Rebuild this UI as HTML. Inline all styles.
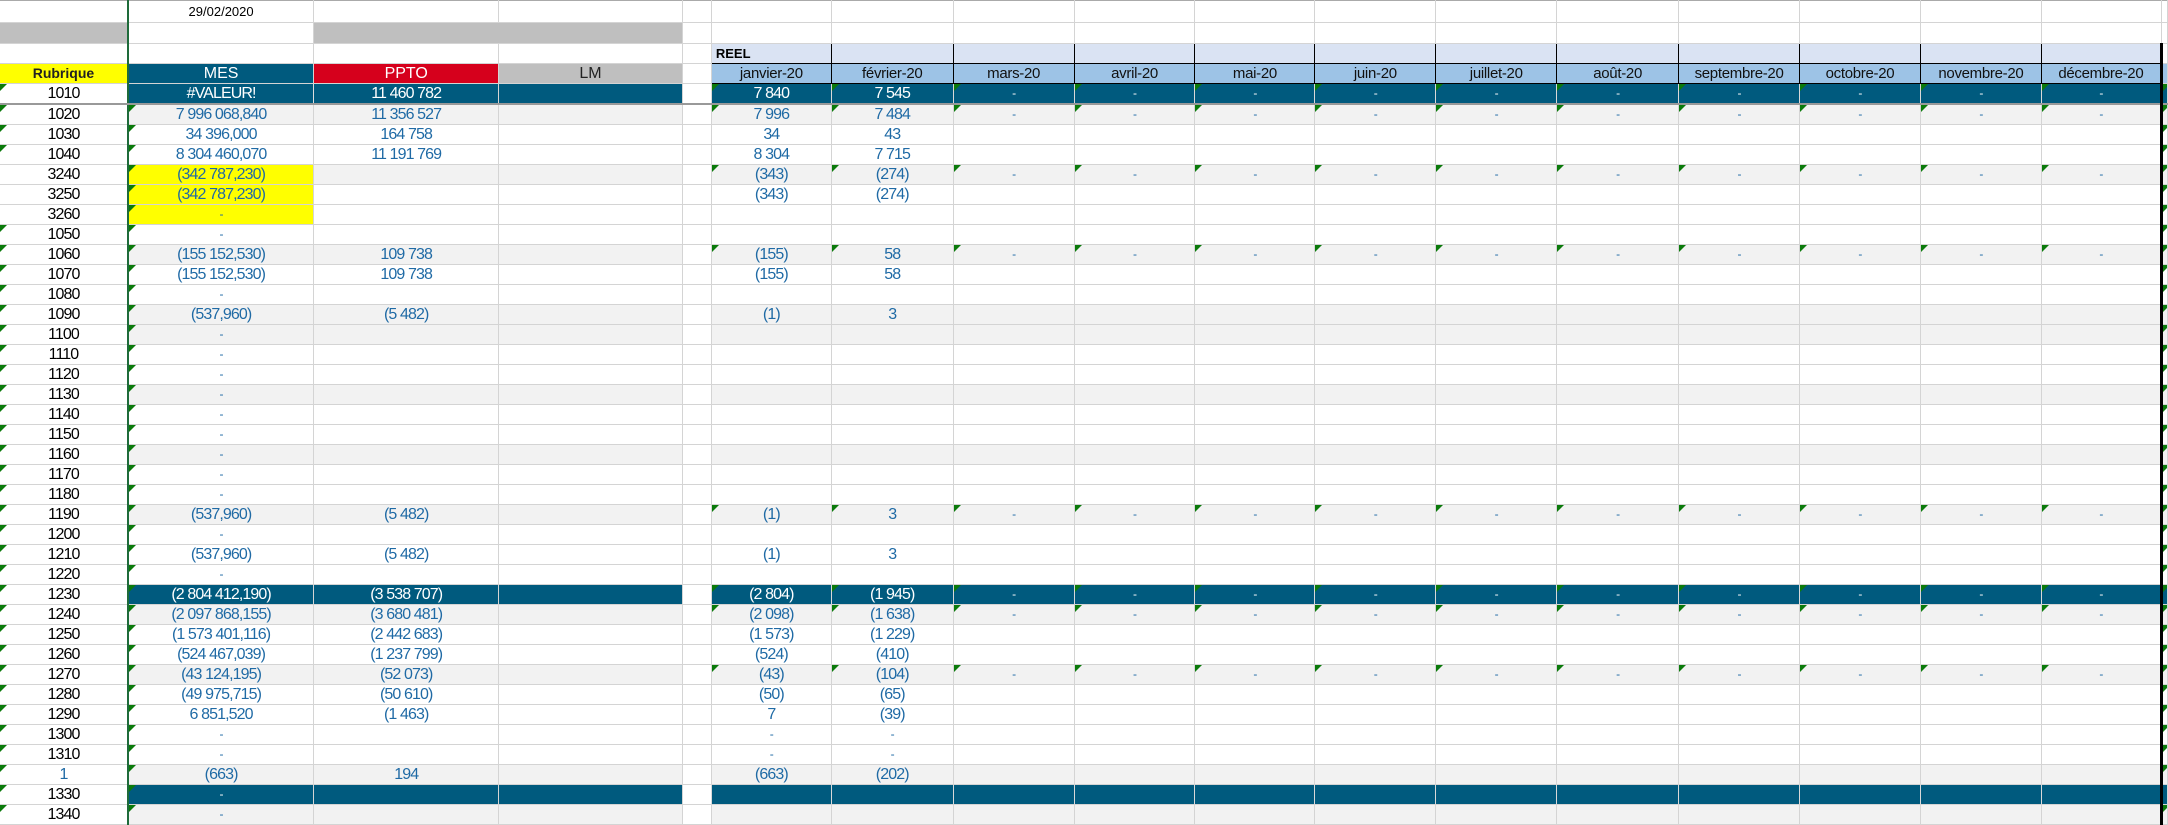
<!DOCTYPE html>
<html><head><meta charset="utf-8">
<style>
html,body{margin:0;padding:0;background:#fff;width:2168px;height:821px;overflow:hidden}
table{border-collapse:collapse;table-layout:fixed;position:absolute;left:0;top:0}
td{border-right:1px solid #d4d4d4;border-bottom:1px solid #d4d4d4;padding:0;text-align:center;font-family:"Liberation Sans",Arial,sans-serif;font-size:16px;color:#1f6aa5;position:relative;white-space:nowrap;overflow:hidden;line-height:19px;letter-spacing:-0.9px}
td.a{color:#000!important;background:#fff!important}
td.e{background:#fff!important;border-right:1px solid #d4d4d4}
tr.d td:nth-child(2){border-left:2px solid #1e6b3a}
tr.g td{background:#f2f2f2}
tr.b td{background:#005a7e;color:#fff}
tr.b td:nth-child(n+5){border-right-color:#d8d8d8}
td.y{background:#ffff00!important;color:#1f6aa5!important}
td.t::before{content:"";position:absolute;left:0;top:0;border-top:7px solid #0b7a0b;border-right:7px solid transparent}
td.k{border-right:3px solid #000!important}
td.m{font-size:12px}
td.h{font-family:"Liberation Sans",Calibri,sans-serif;letter-spacing:0;font-size:14px;color:#000}
.mh td.mo{background:#9dc3e6;border:1px solid #000;color:#111;font-size:15px;letter-spacing:-0.3px}
.rh td.mo{background:#dae3f3;border:1px solid #000;border-bottom:1px solid #000}
</style></head><body>
<table>
<colgroup><col style="width:128px"><col style="width:186px"><col style="width:185px"><col style="width:184px"><col style="width:29px"><col style="width:120px"><col style="width:122px"><col style="width:121px"><col style="width:121px"><col style="width:120px"><col style="width:121px"><col style="width:121px"><col style="width:122px"><col style="width:121px"><col style="width:121px"><col style="width:121px"><col style="width:120px"><col style="width:6px"></colgroup>
<tr style="height:22px" class="d"><td class="a" style="border-top:1px solid #aaa"></td><td class="h" style="font-size:13px;border-top:1px solid #aaa">29/02/2020</td><td style="border-top:1px solid #aaa"></td><td style="border-top:1px solid #aaa"></td><td style="border-top:1px solid #aaa"></td><td style="border-top:1px solid #aaa"></td><td style="border-top:1px solid #aaa"></td><td style="border-top:1px solid #aaa"></td><td style="border-top:1px solid #aaa"></td><td style="border-top:1px solid #aaa"></td><td style="border-top:1px solid #aaa"></td><td style="border-top:1px solid #aaa"></td><td style="border-top:1px solid #aaa"></td><td style="border-top:1px solid #aaa"></td><td style="border-top:1px solid #aaa"></td><td style="border-top:1px solid #aaa"></td><td style="border-top:1px solid #aaa"></td><td style="border-top:1px solid #aaa"></td></tr>
<tr style="height:21px" class="d"><td style="background:#bfbfbf"></td><td></td><td style="background:#bfbfbf;border-right:none"></td><td style="background:#bfbfbf"></td><td></td><td></td><td></td><td></td><td></td><td></td><td></td><td></td><td></td><td></td><td></td><td></td><td></td><td></td></tr>
<tr style="height:20px" class="d rh"><td></td><td></td><td></td><td></td><td></td><td class="mo h" style="text-align:left;font-weight:bold;font-size:13px;padding-left:4px">REEL</td><td class="mo"></td><td class="mo"></td><td class="mo"></td><td class="mo"></td><td class="mo"></td><td class="mo"></td><td class="mo"></td><td class="mo"></td><td class="mo"></td><td class="mo"></td><td class="mo k"></td><td></td></tr>
<tr style="height:19px" class="d mh"><td class="h" style="background:#ffff00;font-weight:bold;color:#222">Rubrique</td><td style="background:#005a7e;color:#fff;letter-spacing:0">MES</td><td style="background:#d6001c;color:#fff;letter-spacing:0">PPTO</td><td style="background:#bfbfbf;color:#222;letter-spacing:0">LM</td><td></td><td class="mo h">janvier-20</td><td class="mo h">février-20</td><td class="mo h">mars-20</td><td class="mo h">avril-20</td><td class="mo h">mai-20</td><td class="mo h">juin-20</td><td class="mo h">juillet-20</td><td class="mo h">août-20</td><td class="mo h">septembre-20</td><td class="mo h">octobre-20</td><td class="mo h">novembre-20</td><td class="mo h k">décembre-20</td><td style="background:#9dc3e6"></td></tr>
<tr style="height:20px" class="d b"><td class="a t" style="border-bottom:2px solid #999">1010</td><td style="border-bottom:2px solid #999;border-right-color:#ddd">#VALEUR!</td><td style="border-bottom:2px solid #999">11 460 782</td><td style="border-bottom:2px solid #999"></td><td class="e" style="border-bottom:2px solid #999"></td><td class="t" style="border-bottom:2px solid #999">7 840</td><td class="t" style="border-bottom:2px solid #999">7 545</td><td class="t m" style="border-bottom:2px solid #999">-</td><td class="t m" style="border-bottom:2px solid #999">-</td><td class="t m" style="border-bottom:2px solid #999">-</td><td class="t m" style="border-bottom:2px solid #999">-</td><td class="t m" style="border-bottom:2px solid #999">-</td><td class="t m" style="border-bottom:2px solid #999">-</td><td class="t m" style="border-bottom:2px solid #999">-</td><td class="t m" style="border-bottom:2px solid #999">-</td><td class="t m" style="border-bottom:2px solid #999">-</td><td class="t m k" style="border-bottom:2px solid #999">-</td><td class="t" style="border-bottom:2px solid #999"></td></tr>
<tr style="height:20px" class="d g"><td class="a t">1020</td><td class="t">7 996 068,840</td><td>11 356 527</td><td></td><td class="e"></td><td class="t">7 996</td><td class="t">7 484</td><td class="t m">-</td><td class="t m">-</td><td class="t m">-</td><td class="t m">-</td><td class="t m">-</td><td class="t m">-</td><td class="t m">-</td><td class="t m">-</td><td class="t m">-</td><td class="t m k">-</td><td class="t"></td></tr>
<tr style="height:20px" class="d"><td class="a t">1030</td><td class="t">34 396,000</td><td>164 758</td><td></td><td class="e"></td><td>34</td><td>43</td><td></td><td></td><td></td><td></td><td></td><td></td><td></td><td></td><td></td><td class="k"></td><td class="t"></td></tr>
<tr style="height:20px" class="d"><td class="a t">1040</td><td class="t">8 304 460,070</td><td>11 191 769</td><td></td><td class="e"></td><td>8 304</td><td>7 715</td><td></td><td></td><td></td><td></td><td></td><td></td><td></td><td></td><td></td><td class="k"></td><td class="t"></td></tr>
<tr style="height:20px" class="d g"><td class="a">3240</td><td class="t y">(342 787,230)</td><td></td><td></td><td class="e"></td><td class="t">(343)</td><td class="t">(274)</td><td class="t m">-</td><td class="t m">-</td><td class="t m">-</td><td class="t m">-</td><td class="t m">-</td><td class="t m">-</td><td class="t m">-</td><td class="t m">-</td><td class="t m">-</td><td class="t m k">-</td><td class="t"></td></tr>
<tr style="height:20px" class="d"><td class="a">3250</td><td class="t y">(342 787,230)</td><td></td><td></td><td class="e"></td><td>(343)</td><td>(274)</td><td></td><td></td><td></td><td></td><td></td><td></td><td></td><td></td><td></td><td class="k"></td><td class="t"></td></tr>
<tr style="height:20px" class="d"><td class="a">3260</td><td class="t y m">-</td><td></td><td></td><td class="e"></td><td></td><td></td><td></td><td></td><td></td><td></td><td></td><td></td><td></td><td></td><td></td><td class="k"></td><td class="t"></td></tr>
<tr style="height:20px" class="d"><td class="a t">1050</td><td class="t m">-</td><td></td><td></td><td class="e"></td><td></td><td></td><td></td><td></td><td></td><td></td><td></td><td></td><td></td><td></td><td></td><td class="k"></td><td class="t"></td></tr>
<tr style="height:20px" class="d g"><td class="a t">1060</td><td class="t">(155 152,530)</td><td>109 738</td><td></td><td class="e"></td><td class="t">(155)</td><td class="t">58</td><td class="t m">-</td><td class="t m">-</td><td class="t m">-</td><td class="t m">-</td><td class="t m">-</td><td class="t m">-</td><td class="t m">-</td><td class="t m">-</td><td class="t m">-</td><td class="t m k">-</td><td class="t"></td></tr>
<tr style="height:20px" class="d"><td class="a t">1070</td><td class="t">(155 152,530)</td><td>109 738</td><td></td><td class="e"></td><td>(155)</td><td>58</td><td></td><td></td><td></td><td></td><td></td><td></td><td></td><td></td><td></td><td class="k"></td><td class="t"></td></tr>
<tr style="height:20px" class="d"><td class="a t">1080</td><td class="t m">-</td><td></td><td></td><td class="e"></td><td></td><td></td><td></td><td></td><td></td><td></td><td></td><td></td><td></td><td></td><td></td><td class="k"></td><td class="t"></td></tr>
<tr style="height:20px" class="d g"><td class="a t">1090</td><td class="t">(537,960)</td><td>(5 482)</td><td></td><td class="e"></td><td>(1)</td><td>3</td><td></td><td></td><td></td><td></td><td></td><td></td><td></td><td></td><td></td><td class="k"></td><td class="t"></td></tr>
<tr style="height:20px" class="d g"><td class="a t">1100</td><td class="t m">-</td><td></td><td></td><td class="e"></td><td></td><td></td><td></td><td></td><td></td><td></td><td></td><td></td><td></td><td></td><td></td><td class="k"></td><td class="t"></td></tr>
<tr style="height:20px" class="d"><td class="a t">1110</td><td class="t m">-</td><td></td><td></td><td class="e"></td><td></td><td></td><td></td><td></td><td></td><td></td><td></td><td></td><td></td><td></td><td></td><td class="k"></td><td class="t"></td></tr>
<tr style="height:20px" class="d"><td class="a t">1120</td><td class="t m">-</td><td></td><td></td><td class="e"></td><td></td><td></td><td></td><td></td><td></td><td></td><td></td><td></td><td></td><td></td><td></td><td class="k"></td><td class="t"></td></tr>
<tr style="height:20px" class="d g"><td class="a t">1130</td><td class="t m">-</td><td></td><td></td><td class="e"></td><td></td><td></td><td></td><td></td><td></td><td></td><td></td><td></td><td></td><td></td><td></td><td class="k"></td><td class="t"></td></tr>
<tr style="height:20px" class="d"><td class="a t">1140</td><td class="t m">-</td><td></td><td></td><td class="e"></td><td></td><td></td><td></td><td></td><td></td><td></td><td></td><td></td><td></td><td></td><td></td><td class="k"></td><td class="t"></td></tr>
<tr style="height:20px" class="d"><td class="a t">1150</td><td class="t m">-</td><td></td><td></td><td class="e"></td><td></td><td></td><td></td><td></td><td></td><td></td><td></td><td></td><td></td><td></td><td></td><td class="k"></td><td class="t"></td></tr>
<tr style="height:20px" class="d g"><td class="a t">1160</td><td class="t m">-</td><td></td><td></td><td class="e"></td><td></td><td></td><td></td><td></td><td></td><td></td><td></td><td></td><td></td><td></td><td></td><td class="k"></td><td class="t"></td></tr>
<tr style="height:20px" class="d"><td class="a t">1170</td><td class="t m">-</td><td></td><td></td><td class="e"></td><td></td><td></td><td></td><td></td><td></td><td></td><td></td><td></td><td></td><td></td><td></td><td class="k"></td><td class="t"></td></tr>
<tr style="height:20px" class="d"><td class="a t">1180</td><td class="t m">-</td><td></td><td></td><td class="e"></td><td></td><td></td><td></td><td></td><td></td><td></td><td></td><td></td><td></td><td></td><td></td><td class="k"></td><td class="t"></td></tr>
<tr style="height:20px" class="d g"><td class="a t">1190</td><td class="t">(537,960)</td><td>(5 482)</td><td></td><td class="e"></td><td class="t">(1)</td><td class="t">3</td><td class="t m">-</td><td class="t m">-</td><td class="t m">-</td><td class="t m">-</td><td class="t m">-</td><td class="t m">-</td><td class="t m">-</td><td class="t m">-</td><td class="t m">-</td><td class="t m k">-</td><td class="t"></td></tr>
<tr style="height:20px" class="d"><td class="a t">1200</td><td class="t m">-</td><td></td><td></td><td class="e"></td><td></td><td></td><td></td><td></td><td></td><td></td><td></td><td></td><td></td><td></td><td></td><td class="k"></td><td class="t"></td></tr>
<tr style="height:20px" class="d"><td class="a t">1210</td><td class="t">(537,960)</td><td>(5 482)</td><td></td><td class="e"></td><td>(1)</td><td>3</td><td></td><td></td><td></td><td></td><td></td><td></td><td></td><td></td><td></td><td class="k"></td><td class="t"></td></tr>
<tr style="height:20px" class="d"><td class="a t">1220</td><td class="t m">-</td><td></td><td></td><td class="e"></td><td></td><td></td><td></td><td></td><td></td><td></td><td></td><td></td><td></td><td></td><td></td><td class="k"></td><td class="t"></td></tr>
<tr style="height:20px" class="d b"><td class="a t">1230</td><td class="t">(2 804 412,190)</td><td>(3 538 707)</td><td></td><td class="e"></td><td class="t">(2 804)</td><td class="t">(1 945)</td><td class="t m">-</td><td class="t m">-</td><td class="t m">-</td><td class="t m">-</td><td class="t m">-</td><td class="t m">-</td><td class="t m">-</td><td class="t m">-</td><td class="t m">-</td><td class="t m k">-</td><td class="t"></td></tr>
<tr style="height:20px" class="d g"><td class="a t">1240</td><td class="t">(2 097 868,155)</td><td>(3 680 481)</td><td></td><td class="e"></td><td class="t">(2 098)</td><td class="t">(1 638)</td><td class="t m">-</td><td class="t m">-</td><td class="t m">-</td><td class="t m">-</td><td class="t m">-</td><td class="t m">-</td><td class="t m">-</td><td class="t m">-</td><td class="t m">-</td><td class="t m k">-</td><td class="t"></td></tr>
<tr style="height:20px" class="d"><td class="a t">1250</td><td class="t">(1 573 401,116)</td><td>(2 442 683)</td><td></td><td class="e"></td><td>(1 573)</td><td>(1 229)</td><td></td><td></td><td></td><td></td><td></td><td></td><td></td><td></td><td></td><td class="k"></td><td class="t"></td></tr>
<tr style="height:20px" class="d"><td class="a t">1260</td><td class="t">(524 467,039)</td><td>(1 237 799)</td><td></td><td class="e"></td><td>(524)</td><td>(410)</td><td></td><td></td><td></td><td></td><td></td><td></td><td></td><td></td><td></td><td class="k"></td><td class="t"></td></tr>
<tr style="height:20px" class="d g"><td class="a t">1270</td><td class="t">(43 124,195)</td><td>(52 073)</td><td></td><td class="e"></td><td class="t">(43)</td><td class="t">(104)</td><td class="t m">-</td><td class="t m">-</td><td class="t m">-</td><td class="t m">-</td><td class="t m">-</td><td class="t m">-</td><td class="t m">-</td><td class="t m">-</td><td class="t m">-</td><td class="t m k">-</td><td class="t"></td></tr>
<tr style="height:20px" class="d"><td class="a t">1280</td><td class="t">(49 975,715)</td><td>(50 610)</td><td></td><td class="e"></td><td>(50)</td><td>(65)</td><td></td><td></td><td></td><td></td><td></td><td></td><td></td><td></td><td></td><td class="k"></td><td class="t"></td></tr>
<tr style="height:20px" class="d"><td class="a t">1290</td><td class="t">6 851,520</td><td>(1 463)</td><td></td><td class="e"></td><td>7</td><td>(39)</td><td></td><td></td><td></td><td></td><td></td><td></td><td></td><td></td><td></td><td class="k"></td><td class="t"></td></tr>
<tr style="height:20px" class="d"><td class="a t">1300</td><td class="t m">-</td><td></td><td></td><td class="e"></td><td class="m">-</td><td class="m">-</td><td></td><td></td><td></td><td></td><td></td><td></td><td></td><td></td><td></td><td class="k"></td><td class="t"></td></tr>
<tr style="height:20px" class="d"><td class="a t">1310</td><td class="t m">-</td><td></td><td></td><td class="e"></td><td class="m">-</td><td class="m">-</td><td></td><td></td><td></td><td></td><td></td><td></td><td></td><td></td><td></td><td class="k"></td><td class="t"></td></tr>
<tr style="height:20px" class="d g"><td class="a t" style="color:#1f6aa5!important">1</td><td class="t">(663)</td><td>194</td><td></td><td class="e"></td><td>(663)</td><td>(202)</td><td></td><td></td><td></td><td></td><td></td><td></td><td></td><td></td><td></td><td class="k"></td><td class="t"></td></tr>
<tr style="height:20px" class="d b"><td class="a t">1330</td><td class="t m">-</td><td></td><td></td><td class="e"></td><td></td><td></td><td></td><td></td><td></td><td></td><td></td><td></td><td></td><td></td><td></td><td class="k"></td><td></td></tr>
<tr style="height:20px" class="d g"><td class="a t">1340</td><td class="t m">-</td><td></td><td></td><td class="e"></td><td></td><td></td><td></td><td></td><td></td><td></td><td></td><td></td><td></td><td></td><td></td><td class="k"></td><td class="t"></td></tr>
</table>
</body></html>
